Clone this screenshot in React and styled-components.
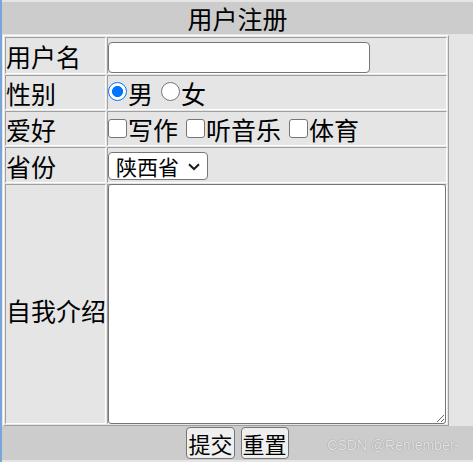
import React from 'react';
import styled, { createGlobalStyle } from 'styled-components';

const CJK = `"Noto Sans CJK SC", "Microsoft YaHei", sans-serif`;

const Global = createGlobalStyle`
  html, body { margin: 0; padding: 0; background: #e5e5e5; }
  body { font-family: ${CJK}; color: #000; }
  *, *::before, *::after { box-sizing: border-box; }
`;

const Page = styled.div`
  min-height: 100vh;
  border-left: 2px solid #79a6d9;
  padding-top: 2px;
  background: #e5e5e5;
`;

const Title = styled.div`
  height: 32px;
  line-height: 32px;
  background: #cccccc;
  text-align: center;
  font-size: 25px;
`;

const Sheet = styled.form`
  display: grid;
  grid-template-columns: 101px 340px;
  grid-template-rows: 37px 35px 35px 36px 240px;
  gap: 1px;
  padding: 1px;
  width: max-content;
  margin: 1px 0 0 1px;
  border: 1px solid;
  border-color: #ffffff #a0a0a0 #a0a0a0 #ffffff;
`;

const Cell = styled.div`
  display: flex;
  align-items: center;
  min-width: 0;
  border: 1px solid;
  border-color: #a0a0a0 #ffffff #ffffff #a0a0a0;
`;

const Label = styled(Cell)`
  font-size: 25px;
  line-height: 1;
  white-space: nowrap;
  padding-top: ${(p) => p.$drop ?? 2}px;
`;

const Field = styled(Cell)`
  font-size: 25px;
  line-height: 1;
  white-space: nowrap;
  overflow: visible;
`;

const TextInput = styled.input`
  width: 262px;
  height: 31px;
  margin: 4px 0 0 0;
  border: 1px solid #767676;
  border-radius: 4px;
  background: #fff;
  font-size: 20px;
  padding: 0 4px;
  font-family: ${CJK};
`;

const Options = styled.div`
  display: flex;
  align-items: center;
  gap: 8px;
  padding-top: 1px;
`;

const Option = styled.label`
  display: inline-flex;
  align-items: center;
  gap: 1px;
`;

const Radio = styled.input.attrs({ type: 'radio' })`
  appearance: none;
  margin: 0 0 3px 0;
  width: 19px;
  height: 19px;
  flex: none;
  border-radius: 50%;
  border: 1.5px solid #767676;
  background: #fff;
  &:checked {
    border-color: #0075ff;
    background: radial-gradient(circle, #0075ff 0 5.2px, #ffffff 5.9px);
  }
`;

const Check = styled.input.attrs({ type: 'checkbox' })`
  appearance: none;
  margin: 0 0 1px 0;
  width: 19px;
  height: 19px;
  flex: none;
  border-radius: 3px;
  border: 1.5px solid #767676;
  background: #fff;
`;

const SelectWrap = styled.div`
  position: relative;
  display: inline-block;
  margin-top: 2px;
`;

const Select = styled.select`
  appearance: none;
  width: 100px;
  height: 28px;
  border: 1px solid #767676;
  border-radius: 4px;
  background: #fff;
  color: #000;
  font-family: ${CJK};
  font-size: 21px;
  line-height: 26px;
  padding: 0 0 0 7px;
`;

const Chevron = styled.svg`
  position: absolute;
  right: 8px;
  top: 11px;
  pointer-events: none;
`;

const Intro = styled.textarea`
  display: block;
  width: 100%;
  height: calc(100% + 2px);
  margin-top: -1px;
  border: 1px solid #767676;
  border-radius: 3px;
  background: #fff;
  font-family: ${CJK};
  font-size: 16px;
`;

const Footer = styled.div`
  position: relative;
  height: 34px;
  background: #cccccc;
  display: flex;
  justify-content: center;
  align-items: center;
  gap: 6px;
`;

const Button = styled.button`
  height: 32px;
  padding: 0 1px;
  border: 1px solid #767676;
  border-radius: 4px;
  background: #efefef;
  color: #000;
  font-family: ${CJK};
  font-size: 22px;
  line-height: 28px;
`;

const Watermark = styled.span`
  position: absolute;
  right: 14px;
  top: 11px;
  font-family: "Liberation Sans", Arial, sans-serif;
  font-size: 14px;
  line-height: 16px;
  color: rgba(255, 255, 255, 0.8);
  text-shadow: 0 0 1px rgba(0, 0, 0, 0.45);
  white-space: nowrap;
`;

export default function App() {
  return (
    <>
      <Global />
      <Page>
        <Title>用户注册</Title>
        <Sheet onSubmit={(e) => e.preventDefault()}>
          <Label>用户名</Label>
          <Field>
            <TextInput type="text" />
          </Field>

          <Label>性别</Label>
          <Field>
            <Options>
              <Option>
                <Radio name="sex" defaultChecked />男
              </Option>
              <Option>
                <Radio name="sex" />女
              </Option>
            </Options>
          </Field>

          <Label>爱好</Label>
          <Field>
            <Options>
              <Option>
                <Check />写作
              </Option>
              <Option>
                <Check />听音乐
              </Option>
              <Option>
                <Check />体育
              </Option>
            </Options>
          </Field>

          <Label>省份</Label>
          <Field>
            <SelectWrap>
              <Select defaultValue="sx">
                <option value="sx">陕西省</option>
                <option value="hn">河南省</option>
                <option value="sd">山东省</option>
              </Select>
              <Chevron width="12" height="8" viewBox="0 0 12 8">
                <polyline points="1,1.2 6,6 11,1.2" fill="none" stroke="#1a1a1a" strokeWidth="2" />
              </Chevron>
            </SelectWrap>
          </Field>

          <Label $drop={12}>自我介绍</Label>
          <Field>
            <Intro />
          </Field>
        </Sheet>
        <Footer>
          <Button type="submit">提交</Button>
          <Button type="reset">重置</Button>
          <Watermark>CSDN @Remember-</Watermark>
        </Footer>
      </Page>
    </>
  );
}
